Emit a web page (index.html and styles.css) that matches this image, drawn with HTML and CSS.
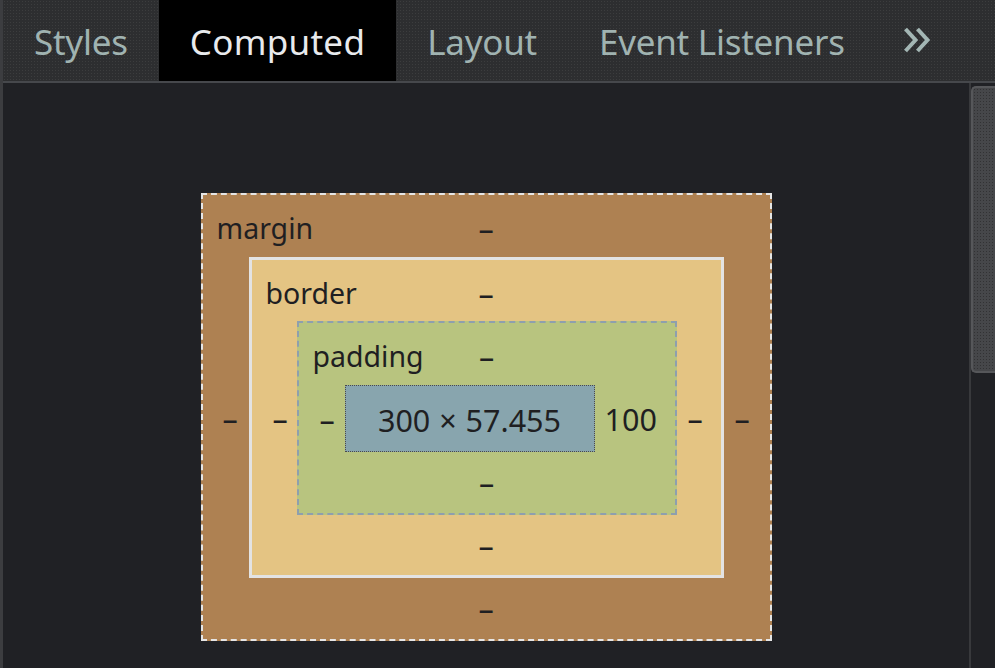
FILE: index.html
```html
<!DOCTYPE html>
<html>
<head>
<meta charset="utf-8">
<link rel="stylesheet" href="styles.css">
</head>
<body>
<div class="page">
  <div class="strip"></div>
  <div class="main">
    <div class="tabbar">
      <div class="tab">Styles</div>
      <div class="tab active">Computed</div>
      <div class="tab">Layout</div>
      <div class="tab">Event Listeners</div>
      <div class="more">
        <svg width="28" height="26" viewBox="0 0 28 26"><path d="M2.5 2 L12.5 13 L2.5 24 M14.5 2 L24.5 13 L14.5 24" fill="none" stroke="#a3b6b4" stroke-width="4"/></svg>
      </div>
    </div>
    <div class="body">
      <div class="content">
        <div class="box margin">
          <div class="top"><span class="label">margin</span><span class="val">–</span><span></span></div>
          <div class="mid">
            <span class="side left">–</span>
            <div class="box border">
              <div class="top"><span class="label">border</span><span class="val">–</span><span></span></div>
              <div class="mid">
                <span class="side left">–</span>
                <div class="box padding">
                  <div class="top"><span class="label">padding</span><span class="val">–</span><span></span></div>
                  <div class="mid">
                    <span class="side left">–</span>
                    <div class="box inner">300 × 57.455</div>
                    <span class="side right">100</span>
                  </div>
                  <div class="bottom"><span class="val">–</span></div>
                </div>
                <span class="side right">–</span>
              </div>
              <div class="bottom"><span class="val">–</span></div>
            </div>
            <span class="side right">–</span>
          </div>
          <div class="bottom"><span class="val">–</span></div>
        </div>
      </div>
      <div class="scrollbar"><div class="thumb"></div></div>
    </div>
  </div>
</div>
</body>
</html>
```
FILE: styles.css
```css
* { box-sizing: border-box; }
html, body { margin: 0; padding: 0; }
body {
  width: 995px;
  height: 668px;
  overflow: hidden;
  background: #202125;
  font-family: "Noto Sans", "Open Sans", sans-serif;
}
.page { display: flex; height: 668px; }
.strip { width: 3px; background: #3c3d40; flex: none; }
.main { flex: 1; display: flex; flex-direction: column; min-width: 0; }
.tabbar {
  height: 83px;
  display: flex;
  align-items: stretch;
  background-color: #2d2e30;
  background-image: radial-gradient(rgba(90,90,90,0.35) 0.6px, transparent 0.8px);
  background-size: 3px 3px;
  border-bottom: 2px solid #46484c;
  flex: none;
}
.tab {
  padding: 0 31px;
  font-size: 35px;
  line-height: 83px;
  color: #a0b3b1;
  letter-spacing: -0.25px;
  white-space: nowrap;
}
.tab.active { background: #000; color: #e8eaed; letter-spacing: 0.3px; }
.more { display: flex; align-items: center; padding-left: 27px; padding-bottom: 2px; }
.more svg { display: block; }
.body { flex: 1; display: flex; }
.content {
  flex: 1;
  display: flex;
  justify-content: center;
  align-items: flex-start;
  padding-top: 110px;
}
.scrollbar {
  width: 26px;
  flex: none;
  border-left: 2px solid #38393c;
  padding-top: 3px;
}
.thumb {
  height: 287px;
  background-color: #46474a;
  background-image: radial-gradient(rgba(30,30,30,0.5) 0.6px, transparent 0.9px);
  background-size: 3px 3px;
  border: 2px solid #56575a;
  border-right: none;
  border-radius: 5px 0 0 5px;
}
.box {
  color: #1f1f22;
  font-size: 28.5px;
}
.top {
  display: grid;
  grid-template-columns: 1fr auto 1fr;
  align-items: center;
  height: 62px;
}
.label { padding-left: 14px; padding-top: 4px; }
.val { text-align: center; padding-top: 4px; font-size: 30.5px; }
.mid { display: flex; align-items: center; }
.side { font-size: 30.5px; flex: none; text-align: left; white-space: nowrap; }
.margin > .mid > .side.left { width: 46px; padding-left: 20px; }
.margin > .mid > .side.right { width: 46px; padding-left: 11px; }
.border > .mid > .side.left { width: 45px; padding-left: 21px; }
.border > .mid > .side.right { width: 44px; padding-left: 11px; }
.padding > .mid > .side.left { width: 46px; padding-left: 21px; }
.padding > .mid > .side.right { width: 80px; padding-left: 10px; }
.bottom {
  height: 61px;
  display: flex;
  justify-content: center;
  align-items: center;
}
.bottom > .val { padding-top: 0; padding-bottom: 1px; }
.margin {
  width: 571px;
  background: #ae8152;
  border: 2px dashed #e6e6e6;
}
.border {
  flex: 1;
  background: #e4c483;
  border: 3px solid #e3e3e3;
}
.border > .top { height: 61px; }
.border > .bottom { height: 60px; }
.padding {
  flex: 1;
  background: #b8c47f;
  border: 2px dashed #8e9fae;
}
.padding > .top { height: 62px; }
.inner {
  flex: 1;
  height: 67px;
  background: #88a5ae;
  border: 1px dotted #4a4a4a;
  display: flex;
  align-items: center;
  justify-content: center;
  padding-top: 3px;
  font-size: 30.5px;
  word-spacing: 1px;
}
```
